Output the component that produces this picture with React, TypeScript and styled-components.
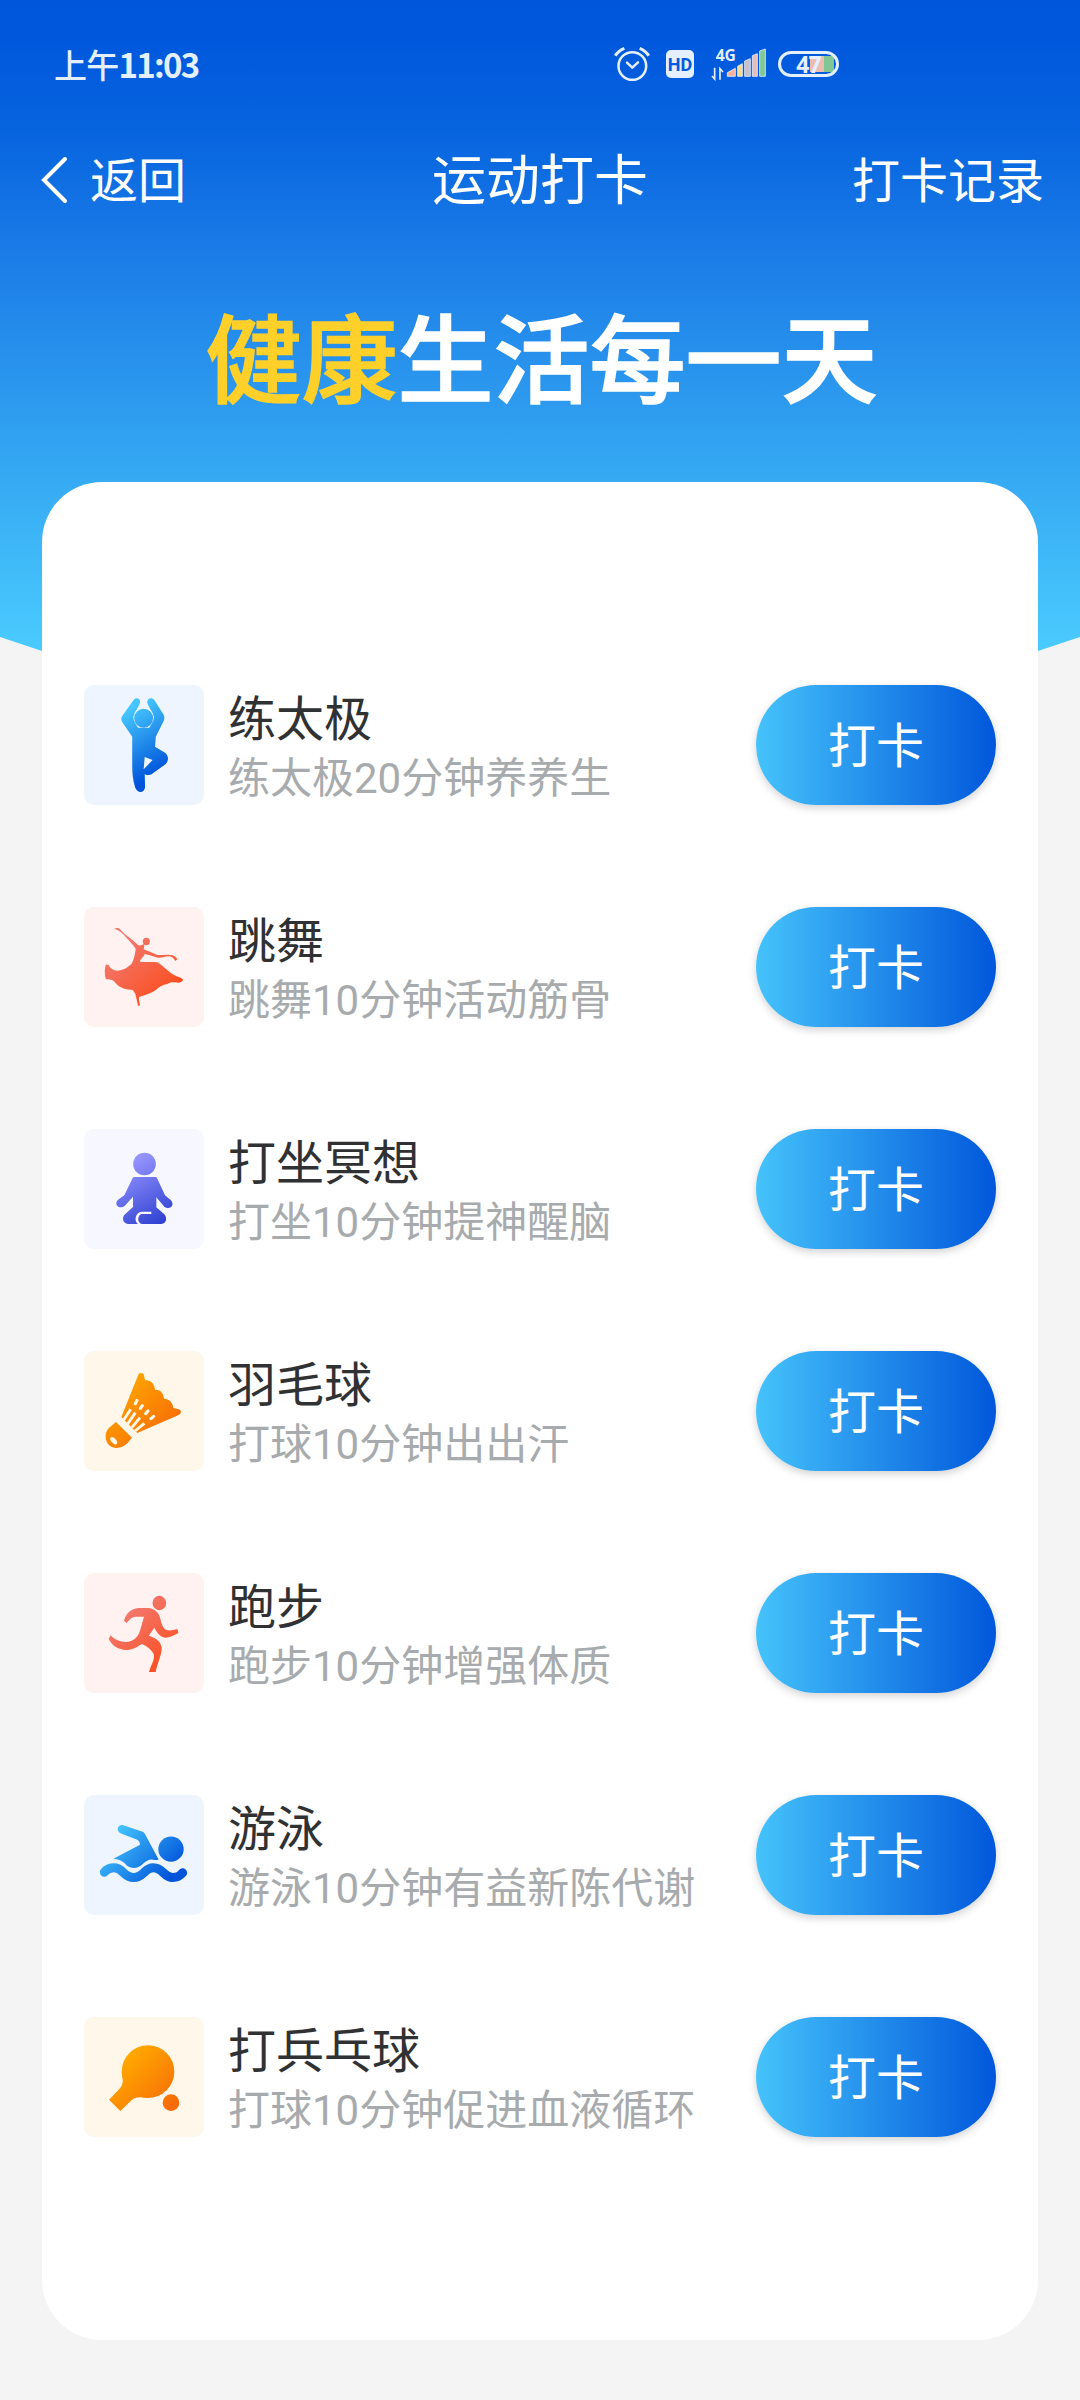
import React from 'react';
import styled, { createGlobalStyle } from 'styled-components';

const GlobalStyle = createGlobalStyle`
  * { box-sizing: border-box; }
  body {
    margin: 0;
    background: #f4f4f4;
    font-family: Roboto, 'Noto Sans CJK SC', sans-serif;
  }
`;

const Page = styled.div`
  width: 1080px;
  height: 2400px;
  overflow: hidden;
  background: #f4f4f4;
`;

const Hero = styled.header`
  display: flex;
  flex-direction: column;
  height: 740px;
  color: #fff;
  background: linear-gradient(
    180deg,
    #0056db 0px,
    #0057dc 36px,
    #0764df 130px,
    #1979e6 240px,
    #36aaf3 480px,
    #4acbfe 650px
  );
  clip-path: polygon(0 0, 1080px 0, 1080px 637px, 1038px 651px, 900px 690px, 540px 730px, 180px 690px, 42px 651px, 0 637px);
`;

const StatusBar = styled.div`
  display: flex;
  align-items: center;
  height: 128px;
  padding-left: 54px;
  color: #e4efff;
`;

const Clock = styled.time`
  width: 560px;
  padding-bottom: 1px;
  font: 500 33px/48px 'Noto Sans CJK SC', sans-serif;
  letter-spacing: -0.8px;
  white-space: nowrap;
`;

const ClockDigits = styled.span`
  font-weight: 700;
  letter-spacing: -1.7px;
`;

const StatusIcons = styled.div`
  display: flex;
  align-items: center;
`;

const HdBadge = styled.span`
  width: 28px;
  height: 28px;
  margin: 0 17px 0 16px;
  border-radius: 5px;
  background: #e4efff;
  color: #0459dc;
  font: 700 18px/29px Roboto, sans-serif;
  text-align: center;
`;

const Battery = styled.span`
  display: flex;
  align-items: center;
  justify-content: center;
  width: 61px;
  height: 26px;
  margin-left: 12px;
  border: 3px solid #e4efff;
  border-radius: 13px;
  background: linear-gradient(90deg, #ecbcb0 0 60%, #80c795 60%) 29px 2px / 24px 16px no-repeat;
  font: 700 23px/20px 'Open Sans', sans-serif;
  letter-spacing: -1px;
`;

const NavBar = styled.nav`
  display: grid;
  grid-template-columns: 1fr auto 1fr;
  align-items: center;
  height: 104px;
  padding: 4px 36px 0 41px;
  font-size: 48px;
  line-height: 72px;
`;

const BackLink = styled.a`
  display: flex;
  align-items: center;
  gap: 21px;

  svg { margin-bottom: 4px; }
`;

const NavTitle = styled.h1`
  margin: 0 5px 0 0;
  font-size: 54px;
  font-weight: 400;
`;

const RecordLink = styled.a`
  text-align: right;
`;

const Headline = styled.h2`
  margin: 60px 0 0 3px;
  font-size: 96px;
  line-height: 140px;
  font-weight: 500;
  text-align: center;
  -webkit-text-stroke: 1.6px currentColor;
`;

const Accent = styled.span`
  color: #ffd02a;
`;

const Card = styled.main`
  position: relative;
  display: flex;
  flex-direction: column;
  gap: 102px;
  width: 996px;
  height: 1858px;
  margin: -258px auto 0;
  padding: 203px 42px 0;
  border-radius: 60px;
  background: #fff;
`;

const Row = styled.section`
  display: flex;
  align-items: center;
  height: 120px;
`;

const Tile = styled.div<{ $bg: string }>`
  width: 120px;
  height: 120px;
  border-radius: 10px;
  background: ${(p) => p.$bg};
  overflow: hidden;

  svg { display: block; width: 120px; height: 120px; }
`;

const Info = styled.div`
  display: flex;
  flex-direction: column;
  flex: 1;
  margin-left: 24px;
  padding-top: 8px;
  white-space: nowrap;
`;

const Name = styled.span`
  font-size: 48px;
  line-height: 60px;
  color: #303133;
`;

const Detail = styled.span`
  font-size: 42px;
  line-height: 58px;
  color: #a8abad;
`;

const CheckIn = styled.button`
  width: 240px;
  height: 120px;
  padding: 3px 0 0;
  border: 0;
  border-radius: 60px;
  background: linear-gradient(90deg, #45c3fb, #0157db);
  box-shadow: 0 3px 8px rgba(0, 0, 0, 0.18);
  color: #fff;
  font: 400 48px/72px Roboto, 'Noto Sans CJK SC', sans-serif;
`;

type Tone = 'blue' | 'red' | 'violet' | 'orange';

const tones: Record<Tone, { bg: string; from: string; to: string }> = {
  blue: { bg: '#eef5ff', from: '#45c6fc', to: '#0054da' },
  red: { bg: '#fff2f0', from: '#f27a70', to: '#fb4f22' },
  violet: { bg: '#f6f7ff', from: '#9896ff', to: '#2b3ed0' },
  orange: { bg: '#fff7e9', from: '#ffaa00', to: '#f76b08' },
};

interface Activity {
  id: string;
  name: string;
  detail: string;
  tone: Tone;
  viewBox: string;
  span: [number, number, number, number];
  shape: React.ReactNode;
}

const activities: Activity[] = [
  {
    id: 'taichi',
    name: '练太极',
    detail: '练太极20分钟养养生',
    tone: 'blue',
    viewBox: '39 45 336 360',
    span: [150, 130, 262, 300],
    shape: (
      <>
        <ellipse cx="206" cy="145" rx="26.5" ry="28.5" />
        <path
          fillRule="evenodd"
          d="M178 90C184 81 197 84 196 97C195 108 178 128 177 143C178 154 185 162 190 173L222 173C227 162 234 154 235 143C234 128 217 108 216 97C216 84 229 80 236 90L262 134Q266 144 262 153L240 200L238 230L266 248C276 257 277 270 268 282L230 311C222 317 213 316 209 312L210 352C208 371 188 371 182 352C176 330 174 310 174 290L174 200L146 156Q141 147 146 138ZM209 261L231 270L206 298Z"
        />
      </>
    ),
  },
  {
    id: 'dance',
    name: '跳舞',
    detail: '跳舞10分钟活动筋骨',
    tone: 'red',
    viewBox: '42 51 360 360',
    span: [150, 150, 290, 310],
    shape: (
      <>
        <ellipse cx="229" cy="154.500" rx="10.500" ry="11" />
        <path d="M132 116C140 112 148 114 152 119C158 127 166 132 172 138C186 148 196 158 204 165C210 168 216 166 221 162L223 168L221 178C235 183 248 189 262 195C278 196 296 192 308 196C316 200 322 206 322 208L316 213C312 206 306 200 298 199C284 199 272 204 264 203C250 200 238 194 224 192C222 200 211 206 210 215C225 218 245 214 262 217C280 228 300 250 318 258C330 262 340 266 339 270C336 278 326 280 316 277C305 276 298 278 292 282C278 285 268 290 262 296C248 308 230 314 207 321C206 330 209 338 210 346L204 348C202 335 198 322 196 312C192 306 190 300 186 299C160 300 145 290 132 274C124 266 114 270 107 266C104 255 103 238 107 225C110 221 116 224 119 230C124 236 130 240 140 242C160 242 175 232 186 220C192 205 196 190 197 176C190 165 180 155 172 146C162 134 150 124 142 120Z" />
      </>
    ),
  },
  {
    id: 'meditate',
    name: '打坐冥想',
    detail: '打坐10分钟提神醒脑',
    tone: 'violet',
    viewBox: '42 57 360 360',
    span: [180, 150, 290, 340],
    shape: (
      <>
        <circle cx="223.500" cy="162" r="34" />
        <path d="M188 204Q189 201 193 201L256 201Q260 201 261 204L285 256L302 270C312 280 308 294 294 294Q288 294 283 290L259 262L259 292L282 312C293 322 290 341 274 342L216 342C201 340 201 314 216 312L244 312L244 305L216 305C194 307 192 334 204 342L174 342C158 340 154 322 166 312L189 291L189 260L164 288C152 297 138 290 139 278Q140 272 146 268L163 256Z" />
      </>
    ),
  },
  {
    id: 'badminton',
    name: '羽毛球',
    detail: '打球10分钟出出汗',
    tone: 'orange',
    viewBox: '42 48 360 360',
    span: [130, 150, 290, 310],
    shape: (
      <>
        <path d="M205 119C208 112 220 112 222 121L225 136C241 134 254 146 255 164C269 163 281 173 282 191C297 191 309 202 310 219L326 223C336 227 334 236 326 240L202 294L154 246Z" />
        <path d="M138 261L186 308L172 325C155 342 128 344 114 327C103 310 105 287 120 276Z" />
        <g stroke={tones.orange.bg} fill="none">
          <path strokeWidth="8.5" d="M182 223L161 255M196 233L173 267M210 248L186 277M223 265L195 288" />
          <path strokeWidth="9.5" strokeLinecap="round" d="M201 196L196 206M217 212L211 220M234 228L227 236M251 244L243 251" />
        </g>
        <ellipse cx="131" cy="317" rx="7" ry="13" transform="rotate(-42 131 317)" fill={tones.orange.bg} />
      </>
    ),
  },
  {
    id: 'run',
    name: '跑步',
    detail: '跑步10分钟增强体质',
    tone: 'red',
    viewBox: '42 39 360 360',
    span: [160, 150, 290, 310],
    shape: (
      <>
        <ellipse cx="268" cy="129" rx="20.500" ry="21.500" />
        <path d="M162 182C168 160 184 146 205 144L236 144C258 148 268 160 272 180C276 198 282 210 294 211C304 212 312 209 322 207L325 219C312 226 298 233 286 233C268 230 260 216 253 203L236 227C256 234 270 240 275 262C277 280 262 310 257 336L237 336C242 316 254 300 252 284C244 268 230 258 215 252C196 266 180 270 168 270C146 268 126 258 116 236L122 226C132 238 148 246 168 246C190 244 204 232 210 212L222 170L196 170C184 172 176 180 170 189Z" />
      </>
    ),
  },
  {
    id: 'swim',
    name: '游泳',
    detail: '游泳10分钟有益新陈代谢',
    tone: 'blue',
    viewBox: '42 44.5 360 360',
    span: [130, 150, 290, 300],
    shape: (
      <>
        <circle cx="303" cy="207" r="38" />
        <path d="M143 147C143 138 152 132 160 135L218 155Q222 157 224 160L266 238Q258 241 246 238C234 238 226 244 216 254C204 266 182 266 170 256C160 244 148 238 130 236L210 194C209 184 206 180 200 178L153 160Q144 156 143 147Z" />
        <path
          fill="none"
          stroke="url(#fill-swim)"
          strokeWidth="27"
          strokeLinecap="round"
          d="M103 276C112 265 120 263 132 263C160 263 160 292 191 292C222 292 222 263 250 263C280 263 280 292 308 292C325 292 331 286 338 278"
        />
      </>
    ),
  },
  {
    id: 'pingpong',
    name: '打兵乓球',
    detail: '打球10分钟促进血液循环',
    tone: 'orange',
    viewBox: '42 51 360 360',
    span: [160, 170, 310, 320],
    shape: (
      <>
        <circle cx="234" cy="215" r="79" />
        <path d="M155 215C158 235 162 246 152 262C146 270 134 282 117 299L151 333L180 305C192 292 205 289 234 294L260 215Z" />
        <circle cx="303" cy="308" r="25" />
      </>
    ),
  },
];

function ActivityIcon({ item }: { item: Activity }) {
  const tone = tones[item.tone];
  const [x1, y1, x2, y2] = item.span;
  const id = `fill-${item.id}`;
  return (
    <Tile $bg={tone.bg}>
      <svg viewBox={item.viewBox} preserveAspectRatio="none" fill={`url(#${id})`}>
        <defs>
          <linearGradient id={id} gradientUnits="userSpaceOnUse" x1={x1} y1={y1} x2={x2} y2={y2}>
            <stop offset="0" stopColor={tone.from} />
            <stop offset="1" stopColor={tone.to} />
          </linearGradient>
        </defs>
        {item.shape}
      </svg>
    </Tile>
  );
}

function AlarmIcon() {
  return (
    <svg width="36" height="36" viewBox="104 78 108 108" fill="none" stroke="#e4efff" strokeWidth="7.5">
      <circle cx="159" cy="138" r="41.5" />
      <path d="M143 128L159 143L176 127" strokeLinecap="round" strokeLinejoin="round" />
      <path d="M108 107Q116 93 135 85M208 107Q200 93 181 85" strokeWidth="9" />
    </svg>
  );
}

function SignalIcon() {
  return (
    <svg width="55" height="49" viewBox="393 55 165 147">
      <text x="407" y="118" fontFamily="Open Sans, sans-serif" fontWeight="700" fontSize="47" fill="#e4efff">
        4G
      </text>
      <path d="M404 138V172L396 163M420 174V141L429 151" fill="none" stroke="#e4efff" strokeWidth="5" />
      <g stroke="#e4efff" strokeWidth="2.5">
        <path d="M442 164V153L466 140V164Z" fill="#ffb09a" />
        <path d="M473 164V134L487 126V164Z" fill="#ffdc8c" />
        <path d="M494 164V118L511 111V164Z" fill="#c9bfc8" />
        <path d="M517 164V102L532 96V164Z" fill="#e9bdb3" />
        <path d="M539 164V88L556 82V164Z" fill="#80c795" />
      </g>
    </svg>
  );
}

function BackIcon() {
  return (
    <svg width="28" height="48" viewBox="0 0 28 48" fill="none" stroke="#fff" strokeWidth="4" strokeLinecap="round">
      <path d="M24 3L3 24L24 45" />
    </svg>
  );
}

export default function App() {
  return (
    <Page>
      <GlobalStyle />
      <Hero>
        <StatusBar>
          <Clock>
            上午<ClockDigits>11:03</ClockDigits>
          </Clock>
          <StatusIcons>
            <AlarmIcon />
            <HdBadge>HD</HdBadge>
            <SignalIcon />
            <Battery>47</Battery>
          </StatusIcons>
        </StatusBar>
        <NavBar>
          <BackLink>
            <BackIcon />
            返回
          </BackLink>
          <NavTitle>运动打卡</NavTitle>
          <RecordLink>打卡记录</RecordLink>
        </NavBar>
        <Headline>
          <Accent>健康</Accent>生活每一天
        </Headline>
      </Hero>
      <Card>
        {activities.map((item) => (
          <Row key={item.id}>
            <ActivityIcon item={item} />
            <Info>
              <Name>{item.name}</Name>
              <Detail>{item.detail}</Detail>
            </Info>
            <CheckIn>打卡</CheckIn>
          </Row>
        ))}
      </Card>
    </Page>
  );
}
